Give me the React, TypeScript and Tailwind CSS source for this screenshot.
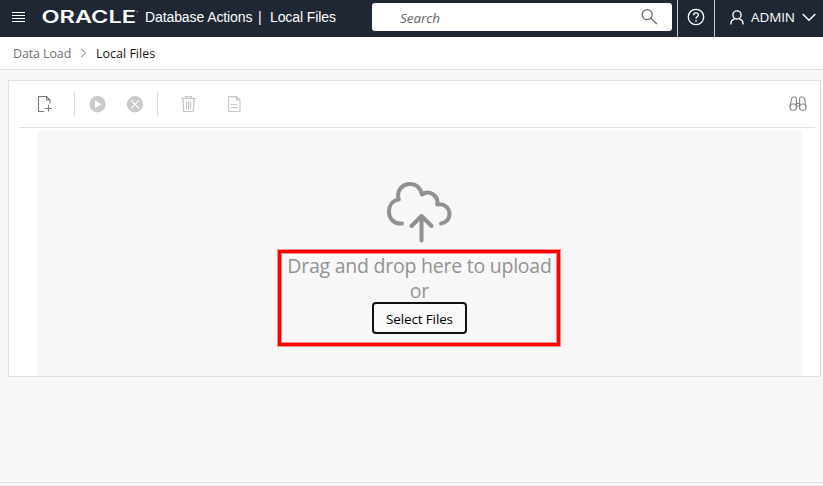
import React from "react";

const segoe = "font-['Open_Sans','Noto_Sans',sans-serif]";
const arial = "font-['Liberation_Sans',Arial,sans-serif]";

function OracleLogo() {
  return (
    <svg className="-mt-[3px] ml-[17px] shrink-0" width="97" height="20" viewBox="0 0 97 20" fill="#fff">
      <text x="-0.5" y="16.1" fontFamily="Inter, sans-serif" fontWeight="600" fontSize="16.8" textLength="94.5" lengthAdjust="spacingAndGlyphs">
        ORACLE
      </text>
      <circle cx="95.3" cy="4.700" r="0.8" fill="#aab" />
    </svg>
  );
}

function Header() {
  return (
    <header className={`flex h-[37px] shrink-0 items-center bg-[#1e2733] text-white ${arial}`}>
      <svg className="-mt-[3px] ml-3 shrink-0" width="13" height="10" viewBox="0 0 13 10" stroke="#fff" strokeWidth="1">
        <path d="M0 .5h13M0 3.5h13M0 6.5h13M0 9.5h13" />
      </svg>
      <OracleLogo />
      <div className="ml-[6px] flex w-[227px] shrink-0 whitespace-nowrap pb-[3px] text-[14px] leading-[20px]">
        <span className="w-[113px] tracking-[-0.1px]">Database Actions</span>
        <span className="w-[12px]">|</span>
        <span className="tracking-[-0.1px]">Local Files</span>
      </div>
      <div className="-mt-[3px] flex h-7 w-[300px] shrink-0 items-center rounded-[3px] bg-white">
        <span className={`ml-7 w-[241px] pt-[2px] text-[13.5px] italic leading-5 tracking-[-0.05px] text-[#656565] ${segoe}`}>Search</span>
        <svg width="17" height="17" viewBox="0 0 17 17" fill="none" stroke="#606060" strokeWidth="1.1">
          <circle cx="6.2" cy="5.600" r="5" />
          <path d="M9.800 9.200l6 5.800" />
        </svg>
      </div>
      <div className="ml-[5px] flex h-full w-[38px] shrink-0 items-center justify-center border-x border-[#c5c8cc] pb-[3px]">
        <svg width="18" height="18" viewBox="0 0 18 18" fill="none" stroke="#fff" strokeWidth="1.3">
          <circle cx="9" cy="9" r="7.7" />
          <path d="M6.600 7.200c0-1.600 1-2.400 2.400-2.400s2.400.9 2.400 2.100c0 1.700-2.400 1.800-2.400 3.800M9 12.100v1.600" />
        </svg>
      </div>
      <div className="flex items-center pb-[3px] pl-[15px]">
        <svg width="14" height="15" viewBox="0 0 14 15" fill="none" stroke="#fff" strokeWidth="1.35">
          <circle cx="7" cy="4.900" r="4.100" />
          <path d="M1 14.500v-1.700c0-1.800 1.300-3 3.200-3.700l.8-.9M13 14.500v-1.700c0-1.800-1.300-3-3.200-3.700L9 8.200" />
        </svg>
        <span className={`ml-[7px] w-[51px] text-[13.5px] leading-5 tracking-[-0.1px] ${segoe}`}>ADMIN</span>
        <svg width="14" height="9" viewBox="0 0 14 9" fill="none" stroke="#fff" strokeWidth="1.5">
          <path d="M.7 1l6.300 6.200L13.300 1" />
        </svg>
      </div>
    </header>
  );
}

function Breadcrumb() {
  return (
    <nav className={`flex h-[33px] shrink-0 items-center whitespace-nowrap border-b border-[#d5dee4] bg-white pl-[13px] text-[12.5px] ${segoe}`}>
      <span className="w-[67px] pt-[2px] tracking-[-0.12px] text-[#6f6f6f]">Data Load</span>
      <svg width="7" height="10" viewBox="0 0 7 10" fill="none" stroke="#777" strokeWidth="1">
        <path d="M1 .8L5.500 5 1 9.200" />
      </svg>
      <span className="ml-[9px] pt-[2px] text-[#161513]">Local Files</span>
    </nav>
  );
}

function Toolbar() {
  return (
    <div className="ml-[10px] mr-[5px] flex h-[47px] items-center border-b border-[#dfdfdf]">
      <svg className="ml-[18px]" width="16" height="17" viewBox="0 0 16 17" fill="none" stroke="#777" strokeWidth="1.1">
        <path d="M7 15.500H1.500V.5h8l3.500 3.500V7.500M9.500.5v3.500H13M11.500 9v6.500M8 12.500h7" />
      </svg>
      <i className="ml-[21px] h-[26px] w-px bg-[#dcdcdc]" />
      <svg className="ml-[14px]" width="17" height="17" viewBox="0 0 17 17">
        <circle cx="8.500" cy="8.300" r="8.200" fill="#c9cacc" />
        <path d="M6 4.300v8l6.500-4z" fill="#fff" />
      </svg>
      <svg className="ml-5" width="18" height="17" viewBox="0 0 18 17">
        <circle cx="9" cy="8.300" r="8.200" fill="#c9cacc" />
        <path d="M5 4.300l8 8M13 4.300l-8 8" stroke="#fff" strokeWidth="1.100" />
      </svg>
      <i className="ml-[13px] h-[26px] w-px bg-[#dcdcdc]" />
      <svg className="ml-[23px]" width="15" height="17" viewBox="0 0 15 17" fill="none" stroke="#c5c5c5" strokeWidth="1.2">
        <path d="M0 2.500h15M4.500 2.500V.6h6v1.900M2 2.500l.7 13h9.600l.7-13M5.500 5.500v8M7.500 5.500v8M9.500 5.500v8" />
      </svg>
      <svg className="ml-[31px]" width="14" height="17" viewBox="0 0 14 17" fill="none" stroke="#c9c9c9" strokeWidth="1.2">
        <path d="M1.500.6h8L13 4v11.500H1.500zM9.500.6V4H13M4 8.500h6.500M4 11.500h6.500" />
      </svg>
      <svg className="ml-auto mr-2" width="18" height="16" viewBox="0 0 18 16" fill="none" stroke="#858585" strokeWidth="1.1">
        <path d="M1 11L2.400 3.200C2.700 1.700 3.400 1 4.600 1H6c.9 0 1.400.6 1.400 1.500V12M17 11l-1.400-7.800C15.300 1.700 14.600 1 13.400 1H12c-.9 0-1.400.6-1.400 1.500V12M7.400 7.500h3.200M7.400 10h3.200" />
        <rect x="1" y="8" width="6.400" height="6.200" rx="2.500" />
        <rect x="10.600" y="8" width="6.400" height="6.200" rx="2.500" />
      </svg>
    </div>
  );
}

function DropZone() {
  return (
    <div className={`ml-7 mr-[18px] mt-[3px] flex h-[245px] flex-col items-center bg-[#f7f7f7] pt-[49px] ${segoe}`}>
      <svg className="mr-1" width="68" height="64" viewBox="0 0 68 64" fill="none" stroke="#919191" strokeWidth="4" strokeLinecap="round" strokeLinejoin="round">
        <path d="M18 43.500C10 44.500 5 38.500 5 31.500C5 25.500 8.500 20.500 14.800 19.500C12 11 18 4 26.300 4C32.300 4 36.300 8 38 14.500C45 9.500 55 15.500 53.200 24.500C61 23 65.500 28.500 65.500 34C65.500 39.500 61.500 43 57 43.500" />
        <path d="M37.500 60.500V36M27.500 46l10-10 10 10" />
      </svg>
      <div className="relative flex flex-col items-center">
        <p className="mt-[9px] whitespace-nowrap text-[19.5px] leading-[26px] tracking-[-0.24px] text-[#929292]">Drag and drop here to upload</p>
        <p className="pt-px text-[19.5px] leading-[22px] text-[#929292]">or</p>
        <button className="h-8 w-[95px] whitespace-nowrap rounded-[4px] border-2 border-[#111] bg-[#f9f9f9] pt-[2px] text-[13.5px] leading-5 tracking-[-0.15px] text-black">Select Files</button>
        <div className="absolute -left-[10px] top-[5px] h-[98px] w-[284px] border border-[#ff8c8c]">
          <div className="h-full w-full border-[3px] border-[#f00]">
            <div className="h-full w-full border border-[#ff8c8c]" />
          </div>
        </div>
      </div>
    </div>
  );
}

export default function App() {
  return (
    <div className="flex h-[486px] w-[823px] flex-col overflow-hidden bg-[#f7f7f7]">
      <Header />
      <Breadcrumb />
      <main className="min-h-0 flex-1 pl-2 pr-[2px] pt-[10px]">
        <section className="h-[297px] border border-[#dfdfdf] bg-white">
          <Toolbar />
          <DropZone />
        </section>
      </main>
      <footer className="h-1 shrink-0 border-t border-[#e1e1e1]" />
    </div>
  );
}
